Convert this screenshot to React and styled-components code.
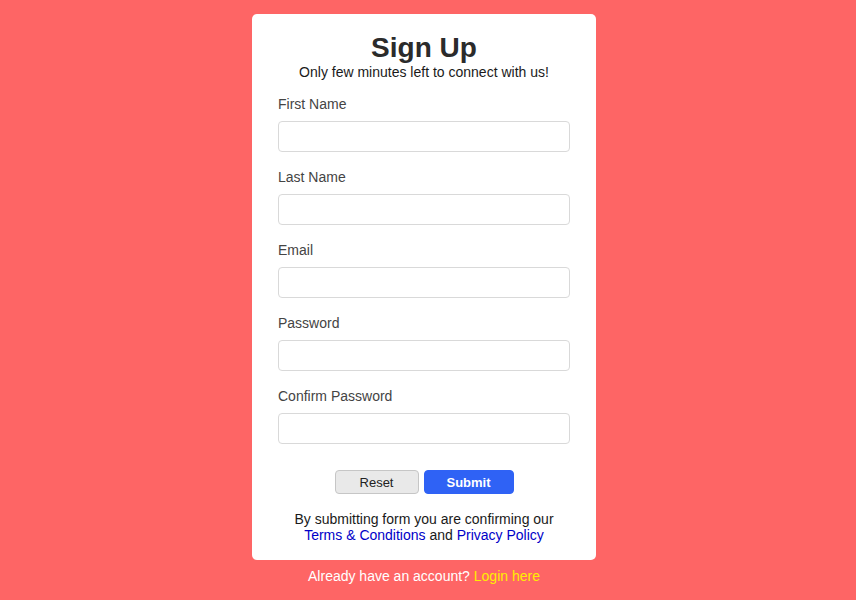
import React from "react";
import styled, { createGlobalStyle } from "styled-components";

const GlobalStyle = createGlobalStyle`
    html, body {
        margin: 0;
        padding: 0;
        background: #fe6565;
        font-family: "Liberation Sans", Arial, sans-serif;
    }
`;

const Page = styled.div`
    min-height: 600px;
    display: flex;
    flex-direction: column;
    align-items: center;
    padding: 14px 8px 0 0;
    box-sizing: border-box;
`;

const Card = styled.form`
    width: 344px;
    box-sizing: border-box;
    background: #fff;
    border-radius: 5px;
    padding: 18px 26px 17px;
    display: flex;
    flex-direction: column;
`;

const Title = styled.h1`
    margin: 0;
    font-size: 28px;
    line-height: 32px;
    font-weight: 700;
    color: #2b2b2b;
    text-align: center;
`;

const Subtitle = styled.p`
    margin: 0 0 15px;
    font-size: 14px;
    line-height: 16px;
    color: #1a1a1a;
    text-align: center;
`;

const Field = styled.div`
    display: flex;
    flex-direction: column;
    gap: 8px;
    margin-bottom: 16px;
`;

const Label = styled.label`
    font-size: 14px;
    line-height: 18px;
    color: #444;
`;

const Input = styled.input`
    height: 31px;
    box-sizing: border-box;
    border: 1px solid #d9d9d9;
    border-radius: 4px;
    padding: 0 8px;
    font-size: 14px;
    font-family: inherit;
    outline: none;
`;

const Actions = styled.div`
    display: flex;
    justify-content: center;
    gap: 5px;
    margin-top: 10px;
    margin-bottom: 17px;
`;

const Button = styled.button`
    height: 24px;
    width: ${p => p.$width}px;
    box-sizing: border-box;
    border-radius: 4px;
    font-size: 13px;
    font-family: inherit;
    border: 1px solid ${p => p.$primary ? "#2f62f5" : "#c6c6c6"};
    background: ${p => p.$primary ? "#2f62f5" : "#e9e9e9"};
    color: ${p => p.$primary ? "#fff" : "#222"};
    font-weight: ${p => p.$primary ? 700 : 400};
    padding: 0;
`;

const Note = styled.p`
    margin: 0;
    font-size: 14px;
    line-height: 16px;
    color: #1a1a1a;
    text-align: center;
`;

const Link = styled.a`
    color: ${p => p.$color};
    text-decoration: none;
`;

const Footer = styled.p`
    margin: 7px 0 0;
    font-size: 14px;
    line-height: 18px;
    color: #fff;
    text-align: center;
`;

const fields = ["First Name", "Last Name", "Email", "Password", "Confirm Password"];

const App = () => {
    return (
        <Page>
            <GlobalStyle />
            <Card onSubmit={e => e.preventDefault()}>
                <Title>Sign Up</Title>
                <Subtitle>Only few minutes left to connect with us!</Subtitle>
                {
                    fields.map(name => (
                        <Field key={name}>
                            <Label>{name}</Label>
                            <Input type={name.includes("Password") ? "password" : "text"} />
                        </Field>
                    ))
                }
                <Actions>
                    <Button type="reset" $width={84}>Reset</Button>
                    <Button type="submit" $width={90} $primary>Submit</Button>
                </Actions>
                <Note>
                    By submitting form you are confirming our<br />
                    <Link href="#" $color="#0000c8">Terms &amp; Conditions</Link> and <Link href="#" $color="#0000c8">Privacy Policy</Link>
                </Note>
            </Card>
            <Footer>
                Already have an account? <Link href="#" $color="#ffee00">Login here</Link>
            </Footer>
        </Page>
    );
};

export default App;
